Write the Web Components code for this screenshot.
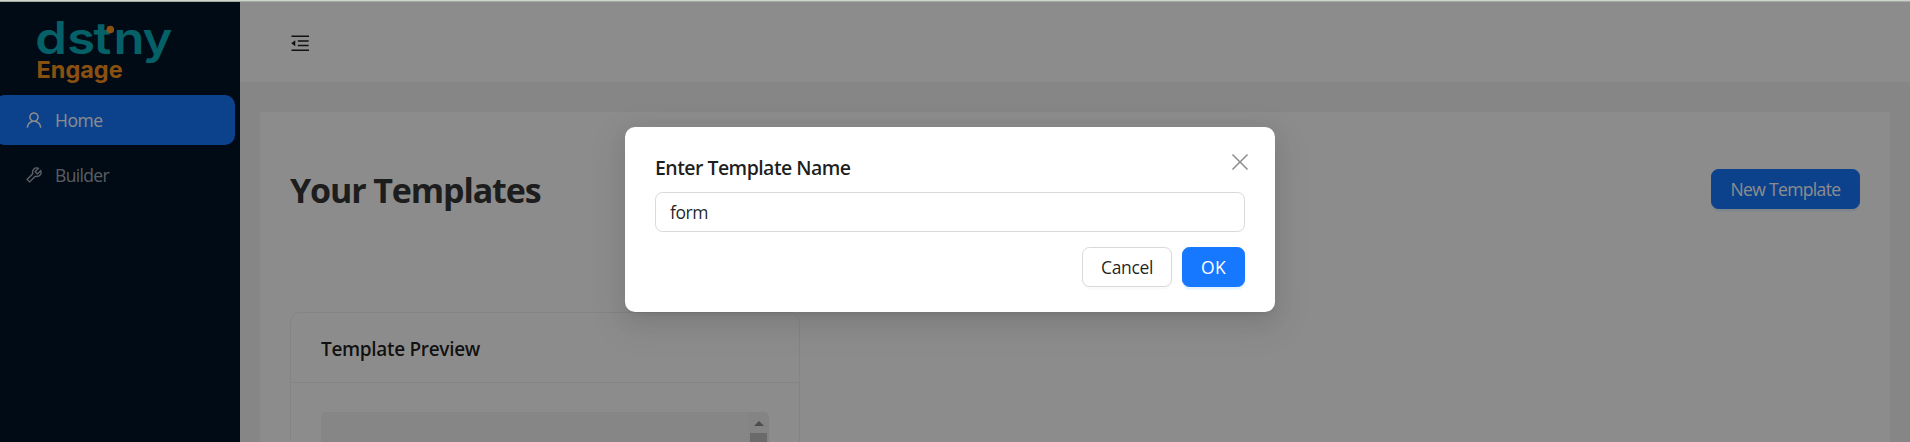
<!DOCTYPE html>
<html lang="en">
<head>
<meta charset="utf-8">
<title>Engage</title>
<style>
html,body{margin:0;height:100%;overflow:hidden}
body{font-family:"Open Sans","Noto Sans",sans-serif;font-size:17.5px;background:#f5f5f5}
</style>
</head>
<body>
<engage-app></engage-app>
<script>
const ICONS={
fold:'M408 442h480c4.400 0 8-3.600 8-8v-56c0-4.400-3.600-8-8-8H408c-4.400 0-8 3.600-8 8v56c0 4.400 3.600 8 8 8zm-8 204c0 4.400 3.600 8 8 8h480c4.400 0 8-3.600 8-8v-56c0-4.400-3.600-8-8-8H408c-4.400 0-8 3.600-8 8v56zm504-486H120c-4.400 0-8 3.600-8 8v56c0 4.400 3.600 8 8 8h784c4.400 0 8-3.600 8-8v-56c0-4.400-3.600-8-8-8zm0 632H120c-4.400 0-8 3.600-8 8v56c0 4.400 3.600 8 8 8h784c4.400 0 8-3.600 8-8v-56c0-4.400-3.600-8-8-8zM115.400 518.900L271.700 642c5.800 4.600 14.400.5 14.400-6.900V388.900c0-7.400-8.500-11.500-14.400-6.900L115.400 505.100a8.740 8.740 0 000 13.800z',
user:'M858.5 763.6a374 374 0 00-80.6-119.5 375.63 375.63 0 00-119.5-80.6c-.4-.2-.8-.3-1.2-.5C719.5 518 760 444.7 760 362c0-137-111-248-248-248S264 225 264 362c0 82.7 40.5 156 102.8 201.1-.4.2-.8.3-1.2.5-44.8 18.9-85 46-119.5 80.6a375.63 375.63 0 00-80.6 119.5A371.7 371.7 0 00136 901.8a8 8 0 008 8.200h60c4.400 0 7.900-3.500 8-7.800 2-77.2 33-149.5 87.8-204.3 56.7-56.7 132-87.9 212.2-87.9s155.500 31.200 212.200 87.900C779 752.7 810 825 812 902.2c.1 4.400 3.600 7.800 8 7.800h60a8 8 0 008-8.200c-1-47.8-10.9-94.3-29.5-138.2zM512 534c-45.9 0-89.1-17.900-121.600-50.400S340 407.900 340 362c0-45.900 17.900-89.100 50.400-121.600S466.100 190 512 190s89.100 17.900 121.600 50.400S684 316.100 684 362c0 45.900-17.900 89.100-50.400 121.600S557.900 534 512 534z',
tool:'M876.6 239.5c-.5-.9-1.2-1.8-2-2.5-5-5-13.1-5-18.1 0L684.2 409.3l-67.9-67.9L788.7 169c.8-.8 1.4-1.6 2-2.5 3.6-6.1 1.6-13.9-4.5-17.5-98.2-58-226.8-44.7-311.3 39.7-67 67-89.2 162-66.5 247.4l-293 293c-3 3-2.8 7.9.3 11l169.7 169.7c3.1 3.100 8.100 3.300 11 .3l292.900-292.900c85.5 22.8 180.5.7 247.600-66.400 84.400-84.500 97.700-213.100 39.700-311.300zM786 499.8c-58.1 58.1-145.3 69.3-214.6 33.6l-8.8 8.800-.1-.1-274 274.100-79.2-79.2 230.1-230.1s0 .1.1.1l52.800-52.800c-35.7-69.300-24.500-156.500 33.600-214.600a184.2 184.2 0 01144-53.500L537 318.900a32.050 32.050 0 000 45.300l124.500 124.500a32.050 32.050 0 0045.300 0l132.800-132.800c3.700 51.800-14.400 104.800-53.600 143.900z',
close:'M155 100L512 457 869 100 924 155 567 512 924 869 869 924 512 567 155 924 100 869 457 512 100 155z'
};
class Base extends HTMLElement{
  constructor(){super();this.attachShadow({mode:'open'})}
  connectedCallback(){this.shadowRoot.innerHTML=this.view()}
}
customElements.define('ant-icon',class extends Base{
  view(){const s=this.getAttribute('size')||20;return `<style>:host{display:block;flex:none;width:${s}px;height:${s}px}svg{display:block}</style><svg width="${s}" height="${s}" viewBox="0 0 1024 1024" fill="currentColor"><path d="${ICONS[this.getAttribute('name')]}"/></svg>`}
});
/* Text run tracked to an exact advance width. */
customElements.define('tracked-text',class extends Base{
  view(){return `<style>:host{display:block;white-space:nowrap;flex:none}span{display:inline-block}</style><span><slot></slot></span>`}
  connectedCallback(){super.connectedCallback();requestAnimationFrame(()=>this.fit());this.fit()}
  fit(){const w=+this.getAttribute('w'),n=this.textContent.length,s=this.shadowRoot.querySelector('span');
    s.style.letterSpacing='0px';const d=(w-s.getBoundingClientRect().width)/n;s.style.letterSpacing=d+'px';this.style.width=w+'px'}
});
customElements.define('brand-logo',class extends Base{
  view(){return `<style>:host{display:block;height:93px}svg{display:block}</style>
<svg width="240" height="93" viewBox="0 2 240 93">
<text transform="scale(1.14 1)" y="54" x="31 59 82 99.500 125" font-family="Inter" font-weight="600" font-size="44.500" fill="#0aafbd">dstny</text>
<circle cx="110.300" cy="29.500" r="3.800" fill="#fa931e"/>
<text x="36.600" y="78" font-family="Inter" font-weight="700" font-size="23.500" textLength="86" lengthAdjust="spacingAndGlyphs" fill="#fa931e">Engage</text>
</svg>`}
});
customElements.define('menu-item',class extends Base{
  view(){return `<style>:host{display:flex;align-items:center;box-sizing:border-box;height:50px;margin:0 5px 5px -5px;padding-left:29px;gap:11px;border-radius:10px;color:rgba(255,255,255,.65)}:host([selected]){background:#1677ff;color:#fff}</style>
<ant-icon name="${this.getAttribute('icon')}" size="20"></ant-icon><slot></slot>`}
});
customElements.define('side-bar',class extends Base{
  view(){return `<style>:host{display:block;width:240px;flex:none;background:#001529}</style>
<brand-logo></brand-logo>
<menu-item icon="user" selected><tracked-text w="47.500">Home</tracked-text></menu-item>
<menu-item icon="tool"><tracked-text w="54">Builder</tracked-text></menu-item>`}
});
customElements.define('ant-button',class extends Base{
  view(){return `<style>:host{display:flex;box-sizing:border-box;align-items:center;justify-content:center;height:40px;border-radius:7.500px;background:#fff;border:1px solid #d9d9d9;color:rgba(0,0,0,.88);box-shadow:0 2.500px 0 rgba(0,0,0,.02)}:host([primary]){background:#1677ff;border-color:#1677ff;color:#fff;box-shadow:0 2.500px 0 rgba(5,145,255,.1)}</style><slot></slot>`}
});
customElements.define('template-card',class extends Base{
  view(){return `<style>
:host{display:flex;flex-direction:column;box-sizing:border-box;width:510px;height:400px;border:1px solid #f0f0f0;border-radius:10px;color:rgba(0,0,0,.88)}
.head{display:flex;align-items:center;height:70px;box-sizing:border-box;border-bottom:1px solid #f0f0f0;padding:2px 0 0 30px;font-weight:600;font-size:19px}
.body{padding:29px 30px}
.box{height:260px;background:#f5f5f5;border-radius:5px;display:flex;justify-content:flex-end;overflow:hidden}
.scroll{width:21px;background:#f1f1f1;display:flex;flex-direction:column;align-items:center;padding-top:9px;box-sizing:border-box}
.arrow{width:0;height:0;border:5px solid transparent;border-top:0;border-bottom-color:#8a8a8a}
.thumb{width:17px;height:100px;background:#c1c1c1;margin-top:7px}
</style><div class="head"><slot></slot></div><div class="body"><div class="box"><div class="scroll"><div class="arrow"></div><div class="thumb"></div></div></div></div>`}
});
customElements.define('top-bar',class extends Base{
  view(){return `<style>:host{display:flex;height:80px;background:#fff;box-sizing:border-box;padding:29.700px 0 0 48.500px;color:rgba(0,0,0,.88)}</style><ant-icon name="fold" size="22.500"></ant-icon>`}
});
customElements.define('templates-page',class extends Base{
  view(){return `<style>
:host{display:block;margin:30px 20px 0;padding:0 30px;background:#fff;height:600px}
header{display:flex;justify-content:space-between;height:200px;box-sizing:border-box;padding-top:57px}
h1{margin:-1px 0 0;font-size:34px;font-weight:700;line-height:44px;color:#363636}
ant-button{width:149px}
</style><header><h1><tracked-text w="250.500">Your Templates</tracked-text></h1><ant-button primary><tracked-text w="110">New Template</tracked-text></ant-button></header>
<template-card><tracked-text w="159">Template Preview</tracked-text></template-card>`}
});
customElements.define('name-dialog',class extends Base{
  view(){return `<style>
:host{display:block;position:relative;box-sizing:border-box;width:650px;height:185px;margin-top:125px;padding:25px 30px;background:#fff;border-radius:10px;color:rgba(0,0,0,.88);box-shadow:0 7.500px 20px rgba(0,0,0,.08),0 3.750px 7.500px -5px rgba(0,0,0,.12),0 11px 35px 10px rgba(0,0,0,.05)}
.title{font-size:19.500px;font-weight:600;line-height:31px;height:40px}
.input{height:40px;box-sizing:border-box;border:1px solid #d9d9d9;border-radius:7.500px;display:flex;align-items:center;padding-left:14px}
.foot{display:flex;justify-content:flex-end;gap:10px;margin-top:15px}
.close{position:absolute;right:25px;top:25px;color:rgba(0,0,0,.45)}
</style><div class="title"><tracked-text w="195.500">Enter Template Name</tracked-text></div>
<div class="input"><tracked-text w="38">form</tracked-text></div>
<div class="foot"><ant-button style="width:90px"><tracked-text w="52">Cancel</tracked-text></ant-button><ant-button primary style="width:63px"><tracked-text w="25">OK</tracked-text></ant-button></div>
<ant-icon class="close" name="close" size="20"></ant-icon>`}
});
customElements.define('modal-mask',class extends Base{
  view(){return `<style>:host{position:absolute;inset:2px 0 0;display:flex;justify-content:center;align-items:flex-start;background:rgba(0,0,0,.45);padding-right:10px}</style><slot></slot>`}
});
customElements.define('engage-app',class extends Base{
  view(){return `<style>:host{display:block;position:relative;height:100vh;overflow:hidden}.strip{height:2px;box-sizing:border-box;background:#cdd4cb;border-bottom:1px solid #a5aba4}.shell{display:flex;height:100%}main{flex:1;min-width:0}</style>
<div class="strip"></div><div class="shell"><side-bar></side-bar><main><top-bar></top-bar><templates-page></templates-page></main></div>
<modal-mask><name-dialog></name-dialog></modal-mask>`}
});
</script>
</body>
</html>
